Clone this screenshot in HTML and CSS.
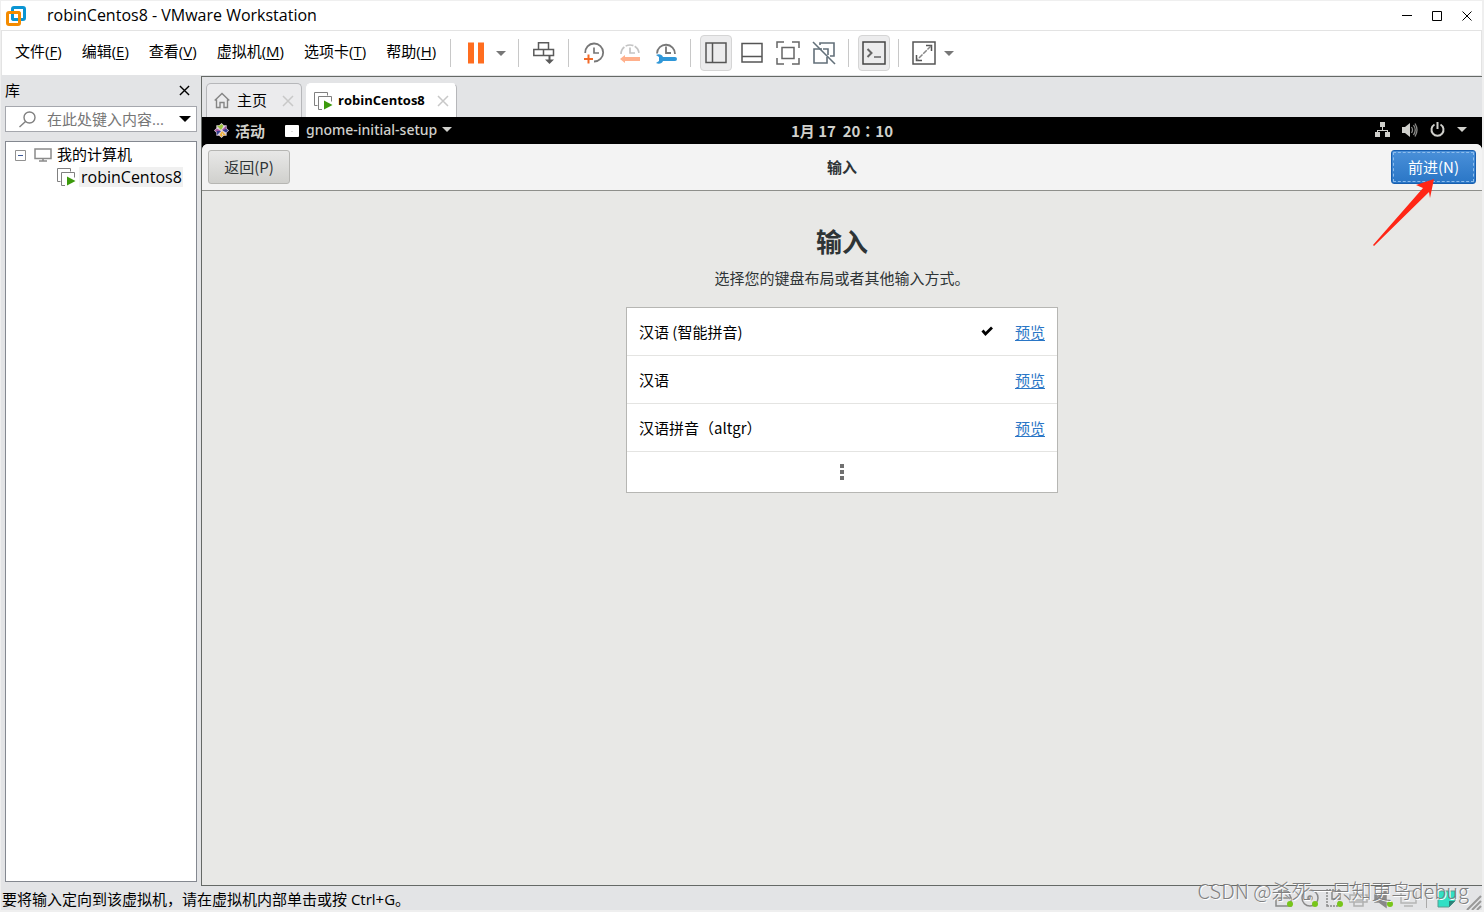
FILE: index.html
```html
<!DOCTYPE html>
<html lang="zh-CN">
<head>
<meta charset="utf-8">
<title>robinCentos8 - VMware Workstation</title>
<link rel="stylesheet" href="styles.css">
</head>
<body>
<svg class="defs" aria-hidden="true">
  <symbol id="vm" viewBox="0 0 19 18">
    <path d="M3.500 13.500h-3V.5h13v3" fill="none" stroke="#808080"/>
    <path d="M8 17.500H4.500v-13h13v5" fill="none" stroke="#808080"/>
    <path d="M10 8.500v9l8.500-4.500z" fill="#3c9a0c"/>
  </symbol>
  <symbol id="x" viewBox="0 0 12 12"><path d="M1 1l10 10M11 1L1 11" fill="none" stroke="currentColor" stroke-width="1.500"/></symbol>
  <symbol id="caret" viewBox="0 0 10 5"><path d="M0 0h10L5 5z" fill="currentColor"/></symbol>
</svg>
<div class="window">
  <header class="titlebar">
    <svg class="logo" width="20" height="20" viewBox="0 0 20 20" fill="none">
      <rect x="6.500" y="1.500" width="12" height="12" rx="1.500" stroke="#0b95d3" stroke-width="3"/>
      <rect x="1.500" y="6.500" width="12" height="12" rx="1.500" stroke="#f38b00" stroke-width="3"/>
      <path d="M6.500 4v8a1.500 1.500 0 0 0 1.500 1.500h3.500" stroke="#0b95d3" stroke-width="3"/>
      <path d="M5 6.500h7A1.500 1.500 0 0 1 13.500 8" stroke="#f38b00" stroke-width="3"/>
    </svg>
    <h1 class="title">robinCentos8 - VMware Workstation</h1>
    <div class="controls">
      <button aria-label="最小化"><svg width="10" height="10"><path d="M0 4.500h10" stroke="#000"/></svg></button>
      <button aria-label="最大化"><svg width="10" height="10"><path d="M.5.5h9v9h-9z" fill="none" stroke="#000"/></svg></button>
      <button aria-label="关闭"><svg width="10" height="10"><path d="M.5.5l9 9M9.500.5l-9 9" stroke="#000"/></svg></button>
    </div>
  </header>

  <div class="menubar">
    <nav class="menus">
      <button>文件(<u>F</u>)</button><button>编辑(<u>E</u>)</button><button>查看(<u>V</u>)</button><button>虚拟机(<u>M</u>)</button><button>选项卡(<u>T</u>)</button><button>帮助(<u>H</u>)</button>
    </nav>
    <div class="group">
      <button class="tool" aria-label="挂起"><svg width="18" height="22"><path d="M1 .5h6v21H1zM11 .5h6v21h-6z" fill="#ff6d1f"/></svg></button>
      <button class="drop" aria-label="电源选项"><svg width="10" height="5"><use href="#caret"/></svg></button>
    </div>
    <div class="group">
      <button class="tool" aria-label="发送 Ctrl+Alt+Del"><svg width="22" height="22" viewBox="0 0 22 22" fill="none" stroke="#5a5a5a" stroke-width="1.500"><path d="M5.500.8h10v6.700h-10zM.8 7.500h9.700v6H.8zM10.500 7.500h10v6h-10z"/><path d="M16.500 13.500v6" stroke-width="2"/><path d="M12 17.500h9l-4.500 4.500z" fill="#5a5a5a" stroke="none"/></svg></button>
    </div>
    <div class="group">
      <button class="tool" aria-label="拍摄快照"><svg width="22" height="22" viewBox="0 0 22 22" fill="none" stroke="#777" stroke-width="1.800"><path d="M2.200 11A9 9 0 1 1 11 19.500"/><path d="M11 5.500V11h5" stroke-width="1.700"/><path d="M5.500 12.500v9M1 17h9" stroke="#f26a28" stroke-width="2"/></svg></button>
      <button class="tool" aria-label="恢复快照"><svg width="22" height="22" viewBox="0 0 22 22" fill="none" stroke="#c4c4c4" stroke-width="1.700"><path d="M2 12A9 9 0 0 1 20 12" stroke-dasharray="8 1.500"/><path d="M11 5.500V11h5"/><path d="M1 17l5-4v2h15v4H6v2z" fill="#ffb08c" stroke="none"/></svg></button>
      <button class="tool" aria-label="管理快照"><svg width="22" height="22" viewBox="0 0 22 22" fill="none" stroke="#777" stroke-width="1.800"><path d="M2 11.500A9 9 0 1 1 20 12"/><path d="M11 4.500V11h5"/><path d="M1 13c3-1.500 6-.5 7 2h12a2 2 0 0 1 0 4H8c-1 2.500-4 3.500-7 2l3-2v-4z" fill="#2f97d8" stroke="none"/></svg></button>
    </div>
    <div class="group">
      <button class="tool on" aria-label="显示库"><svg width="22" height="22" fill="none" stroke="#555" stroke-width="1.500"><path d="M1 1h20v19.500H1zM7.500 1v19.500"/></svg></button>
      <button class="tool" aria-label="显示缩略图栏"><svg width="22" height="22" fill="none" stroke="#555" stroke-width="1.500"><path d="M1 1.500h20v18.500H1zM1 14.500h20"/></svg></button>
      <button class="tool" aria-label="全屏"><svg width="24" height="24" fill="none" stroke="#666" stroke-width="1.500"><path d="M1 7V1h7M16 1h7v6M23 17v6h-7M8 23H1v-6M6 6.500h12v11H6z"/></svg></button>
      <button class="tool" aria-label="Unity"><svg width="24" height="24" fill="none" stroke="#63707a" stroke-width="1.600"><path d="M8 4V2h14v13h-4M10 8H2v14h13v-6M11 8h5v6"/><path d="M1 1l22 22"/></svg></button>
    </div>
    <div class="group">
      <button class="tool on" aria-label="控制台视图"><svg width="24" height="24" fill="none" stroke="#444" stroke-width="1.500"><path d="M1 1h22v22H1z"/><path d="M5.500 8l4 4-4 4" stroke="#666" stroke-width="2"/><path d="M12 16h7" stroke="#666"/></svg></button>
    </div>
    <div class="group">
      <button class="tool" aria-label="自由拉伸"><svg width="24" height="24" fill="none" stroke="#555" stroke-width="1.500"><path d="M1 1h22v22H1zM14 4.500h5.500V10M4.500 14v5.500H10"/><path d="M19 5L5 19" stroke="#888" stroke-dasharray="5 1"/></svg></button>
      <button class="drop" aria-label="拉伸选项"><svg width="10" height="5"><use href="#caret"/></svg></button>
    </div>
  </div>

  <div class="workspace">
    <aside class="library">
      <div class="library-head"><h2>库</h2><button aria-label="关闭库"><svg width="11" height="11"><use href="#x"/></svg></button></div>
      <div class="search">
        <svg width="17" height="17" viewBox="0 0 17 17" fill="none" stroke="#808080" stroke-width="1.400"><circle cx="10.500" cy="6.500" r="5.500"/><path d="M6.500 10.500L.5 16"/></svg>
        <input type="text" aria-label="搜索库" placeholder="在此处键入内容...">
        <button aria-label="搜索选项"><svg width="12" height="6" viewBox="0 0 10 5"><use href="#caret"/></svg></button>
      </div>
      <div class="tree">
        <div class="node">
          <svg width="11" height="11" fill="#fff"><path d="M.5.5h10v10H.5z" stroke="#919191"/><path d="M3 5.500h5" stroke="#3d5a99"/></svg>
          <svg width="18" height="14" fill="none" stroke="#8b8b8b" stroke-width="1.500"><path d="M1 1h16v9.500H1z"/><path d="M9 10v3M5 13h8"/></svg>
          <span>我的计算机</span>
        </div>
        <div class="node child"><svg width="19" height="18"><use href="#vm"/></svg><span class="selected">robinCentos8</span></div>
      </div>
    </aside>

    <main class="console">
      <div class="tabs">
        <div class="tab">
          <svg width="16" height="17" viewBox="0 0 16 17" fill="none" stroke="#858585" stroke-width="1.400"><path d="M.7 8.500L8 1.500l7.300 7M2.500 7.500V15.500H6v-5h4v5h3.500v-8"/></svg>
          <button class="tab-name">主页</button>
          <button class="tab-close" aria-label="关闭主页"><svg width="12" height="12"><use href="#x"/></svg></button>
        </div>
        <div class="tab active">
          <svg width="19" height="18"><use href="#vm"/></svg>
          <button class="tab-name">robinCentos8</button>
          <button class="tab-close" aria-label="关闭 robinCentos8"><svg width="12" height="12"><use href="#x"/></svg></button>
        </div>
      </div>

      <div class="guest">
        <div class="topbar">
          <div class="top-left">
            <svg width="15" height="15" viewBox="0 0 16 16"><path d="M8 0l2.500 2.500h3v3L16 8l-2.500 2.500v3h-3L8 16l-2.500-2.500h-3v-3L0 8l2.500-2.500v-3h3z" fill="#ddd0dd"/><path d="M3 3h4.500v4.500zM8 1l2 2-2 4-2-4z" fill="#9bc33b"/><path d="M13 3v4.500H8.500zM1 8l2-2 4 2-4 2z" fill="#a052a0"/><path d="M3 13V8.500h4.500zM15 8l-2-2-4 2 4 2z" fill="#343f91"/><path d="M13 13H8.500V8.500zM8 15l2-2-2-4-2 4z" fill="#efb239"/></svg>
            <button class="activities">活动</button>
            <svg width="14" height="12"><rect width="14" height="12" rx="1" fill="#fff"/><path d="M6 7l1-1 1 1z" fill="#bbb"/></svg>
            <button class="app">gnome-initial-setup <svg width="10" height="5"><use href="#caret"/></svg></button>
          </div>
          <button class="clock" lang="zh-TW">1月 17&nbsp; 20：10</button>
          <div class="top-right">
            <svg width="15" height="15" fill="#d0d0cc"><path d="M5 0h5v5H5zM0 10h5v5H0zM10 10h5v5h-5zM7 5h1v3h5v2h-1V9H3v1H2V8h5z"/></svg>
            <svg width="16" height="14" fill="#d0d0cc"><path d="M0 4h3l5-4v14l-5-4H0z"/><path d="M9.500 4q2 3 0 6M11.500 2q3.500 5 0 10M13 .5q4 6.500 0 13" fill="none" stroke="#8a8a88" stroke-width="1.300"/></svg>
            <svg width="15" height="15" fill="none" stroke="#d0d0cc" stroke-width="2"><path d="M4.500 2.500a6 6 0 1 0 6 0M7.500 0v7"/></svg>
            <svg width="10" height="5" viewBox="0 0 10 5"><use href="#caret"/></svg>
          </div>
        </div>

        <div class="page">
          <div class="headerbar">
            <button class="action">返回(P)</button>
            <h2>输入</h2>
            <div class="next">
              <button class="action primary">前进(N)</button>
              <svg class="arrow" width="64" height="70" viewBox="0 0 64 70" aria-hidden="true"><path d="M61 1L43 7l7 3L0 67l1 1 55-54 1 6z" fill="#ff2616"/></svg>
            </div>
          </div>
          <section class="setup">
            <h3>输入</h3>
            <p>选择您的键盘布局或者其他输入方式。</p>
            <ul class="inputs">
              <li><span>汉语 (智能拼音)</span><svg width="12" height="12" aria-label="已选择"><path d="M1.500 4.500L4.500 8l6.500-6.500" fill="none" stroke="#000" stroke-width="2.800"/></svg><a href="#preview">预览</a></li>
              <li><span>汉语</span><a href="#preview">预览</a></li>
              <li><span>汉语拼音（altgr）</span><a href="#preview">预览</a></li>
              <li class="more"><button aria-label="更多"><svg width="4" height="16" fill="#707070"><path d="M0 0h4v4H0zM0 6h4v4H0zM0 12h4v4H0z"/></svg></button></li>
            </ul>
          </section>
        </div>
      </div>
    </main>
  </div>

  <footer class="status">
    <span>要将输入定向到该虚拟机，请在虚拟机内部单击或按 Ctrl+G。</span>
    <div class="devices">
      <svg width="208" height="24" viewBox="0 0 208 24" fill="none" stroke="#898989" stroke-width="1.500" aria-hidden="true">
        <path d="M2 12l3-7h9l3 7v8H2zM2 12h15"/><circle cx="36" cy="12" r="8"/><circle cx="36" cy="12" r="2"/>
        <path d="M53 20V4h12v16z" stroke-dasharray="2 1"/><path d="M58 5h8v8h-8z"/>
        <path d="M80 8V4h9v4M76 9h17v7H76zM80 14h9v6h-9z" stroke="#b0b0b0"/>
        <path d="M101 9h4l7-5v17l-7-5h-4z" fill="#898989"/><path d="M127 5h15v12h-15zM130 20h9" stroke="#b5b5b5"/>
        <path d="M152.500 2v20" stroke="#aaa" stroke-width="1"/>
        <path d="M164 5h17v10l-6 6h-11z" fill="#31dfc5" stroke="#5a9b90" stroke-width="1"/><path d="M175 21v-6h6z" fill="#2c8179" stroke="none"/>
        <path d="M193 24l14-14M198 24l9-9M203 24l4-4" stroke="#999" stroke-width="2"/>
        <g fill="#78c51b" stroke="none"><circle cx="16" cy="18" r="3"/><circle cx="41" cy="18" r="3"/><circle cx="66" cy="18" r="3"/><circle cx="116" cy="18" r="3"/></g>
      </svg>
      <span class="watermark">CSDN @杀死一只知更鸟debug</span>
    </div>
  </footer>
</div>
</body>
</html>
```
FILE: styles.css
```css
* { box-sizing: border-box; }
body {
  margin: 0;
  background: #efefef;
  color: #000;
  font: 15px/20px "Open Sans", "Noto Sans CJK SC", sans-serif;
}
h1, h2, h3, p, ul { margin: 0; padding: 0; font-size: 15px; font-weight: 400; list-style: none; }
button { margin: 0; padding: 0; border: 0; background: none; color: inherit; font: inherit; }
svg { display: block; flex: none; }
.defs { position: absolute; width: 0; height: 0; }

.window { display: flex; flex-direction: column; min-height: 100vh; padding: 1px 2px 2px 1px; }

.titlebar { display: flex; align-items: center; height: 29px; padding-left: 5px; background: #fff; }
.title { flex: 1; margin-left: 21px; padding-bottom: 1px; font-size: 16px; }
.controls { display: flex; }
.controls button { display: grid; place-items: center; width: 30px; height: 28px; }

.menubar { display: flex; align-items: center; height: 46px; border: 1px solid #e3e3e3; border-bottom-color: #e3e4e6; background: #fff; }
.menus { display: flex; gap: 20px; padding: 0 14px 4px 13px; white-space: nowrap; }
.menus u { text-underline-offset: 2px; }
.group { display: flex; align-items: center; gap: 4px; height: 28px; padding: 0 8px 0 9px; border-left: 1px solid #c8c8c8; }
.tool { display: grid; place-items: center; width: 32px; height: 36px; border: 1px solid transparent; border-radius: 4px; }
.tool.on { border-color: #d5d5d5; background: #ececed; }
.drop { display: grid; place-items: center; width: 18px; height: 28px; margin-left: -4px; color: #777; }

.workspace { display: flex; flex: 1; background: #e3e4e6; }
.library { display: flex; flex-direction: column; width: 200px; padding: 4px; }
.library-head { display: flex; align-items: center; justify-content: space-between; height: 20px; padding-right: 7px; }
.search { display: flex; align-items: center; height: 26px; margin-top: 6px; padding: 0 5px 0 13px; border: 1px solid #a5a7ad; background: #fff; }
.search input { flex: 1; min-width: 0; margin-left: 11px; padding: 0; border: 0; outline: 0; background: none; font: inherit; }
.search input::placeholder { color: #767676; opacity: 1; }
.tree { flex: 1; margin-top: 9px; padding: 2px 0 0 9px; border: 1px solid #848890; background: #fff; }
.node { display: flex; align-items: center; height: 22px; }
.node svg + svg { margin-left: 8px; }
.node span { margin-left: 5px; padding-bottom: 2px; }
.node.child { padding-left: 42px; }
.node .selected { margin-left: 3px; padding: 0 1px 0 2px; background: #f0f0f0; font-size: 16px; }

.console { display: flex; flex: 1; flex-direction: column; min-width: 0; border: 1px solid #656966; border-right: 0; }
.tabs { display: flex; gap: 4px; padding: 6px 4px 0; }
.tab { display: flex; align-items: center; height: 34px; padding: 0 7px; border: 1px solid #b6b7ba; border-bottom: 0; border-radius: 5px 5px 0 0; background: #ebebed; }
.tab.active { border-color: #fff #b6b7ba #fff #fff; background: #fff; }
.tab-name { margin: 0 15px 0 7px; padding-bottom: 2px; }
.tab.active .tab-name { margin-left: 5px; margin-right: 12px; font-size: 13px; font-weight: 700; }
.tab-close { color: #c8c8c8; }

.guest { display: flex; flex: 1; flex-direction: column; background: #000; }
.topbar { display: grid; grid-template-columns: 1fr auto 1fr; align-items: center; height: 27px; color: #d0d0cc; font-family: "Noto Sans", "Noto Sans CJK SC", sans-serif; font-weight: 500; }
.top-left { display: flex; align-items: center; padding-left: 12px; }
.activities { margin: 0 20px 0 6px; font-weight: 700; }
.app { display: flex; align-items: center; gap: 5px; margin-left: 7px; padding-bottom: 2px; font-size: 14px; white-space: nowrap; }
.clock { font-family: "Noto Sans CJK TC", sans-serif; font-weight: 700; }
.top-right { display: flex; align-items: center; justify-content: flex-end; gap: 12px; padding: 0 15px 2px 0; }

.page { flex: 1; border-radius: 6px 6px 0 0; background: #e8e8e6; font-family: "Noto Sans CJK SC", sans-serif; }
.headerbar { display: grid; grid-template-columns: 1fr auto 1fr; align-items: center; height: 47px; padding: 0 6px; border-bottom: 1px solid #8e8f8b; border-radius: 6px 6px 0 0; background: #f3f3f3; color: #2e3436; }
.headerbar h2 { font-weight: 700; }
.action { justify-self: start; width: 82px; height: 34px; border: 1px solid #b6b6b3; border-radius: 3px; background: linear-gradient(#e8e8e7, #d0d0cd); }
.next { position: relative; justify-self: end; }
.primary { display: block; width: 85px; border-color: #185fb0; background: linear-gradient(#4a90d9, #2a76c6); color: #fff; outline: 1px dashed #8dbcec; outline-offset: -3px; }
.arrow { position: absolute; right: 39px; top: 28px; }

.setup { display: flex; flex-direction: column; align-items: center; padding: 31px 16px; color: #2e3436; }
.setup h3 { font-size: 26px; font-weight: 700; line-height: 38px; }
.setup p { margin-top: 8px; line-height: 20px; }
.inputs { width: 100%; max-width: 432px; margin-top: 19px; border: 1px solid #b6b6b3; background: #fff; color: #000; }
.inputs li { display: flex; align-items: center; gap: 22px; height: 48px; padding: 0 12px; border-bottom: 1px solid #e4e4e2; }
.inputs span { flex: 1; }
.inputs a { color: #2a76c6; text-underline-offset: 2px; }
.inputs .more { justify-content: center; height: 40px; padding: 0; border: 0; }

.status { display: flex; justify-content: space-between; height: 24px; background: #e3e4e6; }
.status > span { margin-top: 3px; padding-left: 1px; white-space: nowrap; }
.devices { position: relative; }
.watermark { position: absolute; right: 13px; top: -9px; color: #808080; font: 300 20px/28px "Noto Sans CJK SC", sans-serif; white-space: nowrap; text-shadow: 1px 1px 0 #fff; }
```
